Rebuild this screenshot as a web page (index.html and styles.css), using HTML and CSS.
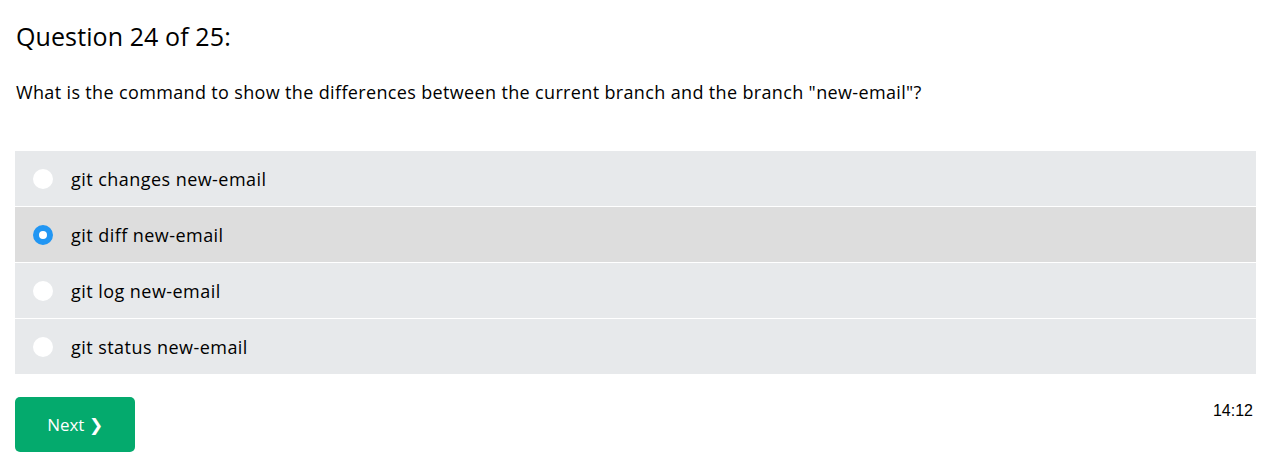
FILE: index.html
```html
<!DOCTYPE html>
<html>
<head>
<meta charset="utf-8">
<link rel="stylesheet" href="styles.css">
</head>
<body>
<div class="quiz">
  <h2 class="title">Question 24 of 25:</h2>
  <p class="question">What is the command to show the differences between the current branch and the branch "new-email"?</p>
  <div class="options">
    <label class="option"><span class="radio"></span><span class="label">git changes new-email</span></label>
    <label class="option selected"><span class="radio"></span><span class="label">git diff new-email</span></label>
    <label class="option"><span class="radio"></span><span class="label">git log new-email</span></label>
    <label class="option"><span class="radio"></span><span class="label">git status new-email</span></label>
  </div>
  <div class="footer">
    <button class="next">Next &#10095;</button>
    <span class="timer">14:12</span>
  </div>
</div>
</body>
</html>
```
FILE: styles.css
```css
html, body { margin: 0; padding: 0; background: #fff; }
body { font-family: "Open Sans", "Noto Sans", sans-serif; color: #000; }
.quiz { padding: 0 20px 0 15px; }
.title { font-weight: 400; font-size: 25px; letter-spacing: 0.1px; margin: 0; padding-top: 18px; line-height: 36px; padding-left: 1px; }
.question { font-size: 18px; letter-spacing: 0.35px; margin: 0; padding-top: 24px; line-height: 28px; padding-left: 1px; }
.options { margin-top: 45px; display: flex; flex-direction: column; gap: 1px; }
.option { display: flex; align-items: center; height: 55px; background: #e7e9eb; font-size: 18px; letter-spacing: 0.45px; }
.option.selected { background: #dddddd; }
.radio { width: 20px; height: 20px; border-radius: 50%; background: #fff; margin-left: 18px; margin-right: 18px; box-sizing: border-box; flex: none; }
.selected .radio { background: #fff; border: 6px solid #2196f3; }
.footer { display: flex; justify-content: space-between; align-items: flex-start; margin-top: 23px; }
.next { background: #04aa6d; color: #fff; border: 0; border-radius: 5px; width: 120px; height: 55px; font-family: inherit; font-size: 17px; padding: 0; }
.timer { font-family: "Liberation Sans", Arial, sans-serif; font-size: 16px; margin-top: 5px; margin-right: 3px; }
```
